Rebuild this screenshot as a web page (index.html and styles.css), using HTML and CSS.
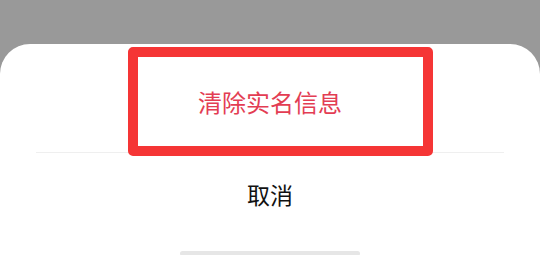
FILE: index.html
```html
<!DOCTYPE html>
<html lang="zh-CN">
<head>
    <meta charset="UTF-8">
    <meta name="viewport" content="width=device-width, initial-scale=1.0">
    <title>清除实名信息</title>
    <link rel="stylesheet" href="styles.css">
</head>
<body>
    <div class="sheet">
        <div class="action-item">
            <span class="action-danger">清除实名信息</span>
            <div class="highlight-box"></div>
        </div>
        <div class="divider"></div>
        <div class="action-cancel">取消</div>
        <div class="home-bar"></div>
    </div>
</body>
</html>
```

FILE: styles.css
```css
* {
    margin: 0;
    padding: 0;
    box-sizing: border-box;
}

body {
    font-family: "Noto Sans CJK SC", "Noto Sans", sans-serif;
    background: #999999;
    height: 255px;
    overflow: hidden;
    padding-top: 44px;
}

.sheet {
    background: #ffffff;
    border-radius: 30px 30px 0 0;
    height: 211px;
}

.action-item {
    position: relative;
    height: 108px;
    display: flex;
    justify-content: center;
    align-items: center;
    padding-top: 8px;
}

.action-danger {
    color: #e33d53;
    font-size: 24px;
    line-height: 1;
}

/* 标注框 */
.highlight-box {
    position: absolute;
    top: 3px;
    left: 128px;
    width: 305px;
    height: 109px;
    border: 10.5px solid #f53535;
    border-radius: 5px;
}

.divider {
    height: 1px;
    background: #efefef;
    margin: 0 36px;
}

.action-cancel {
    height: 82px;
    display: flex;
    justify-content: center;
    align-items: center;
    font-size: 23px;
    color: #111111;
}

.home-bar {
    width: 180px;
    height: 5px;
    margin: 16px auto 0;
    background: #e6e6e6;
    border-radius: 3px;
}
```
